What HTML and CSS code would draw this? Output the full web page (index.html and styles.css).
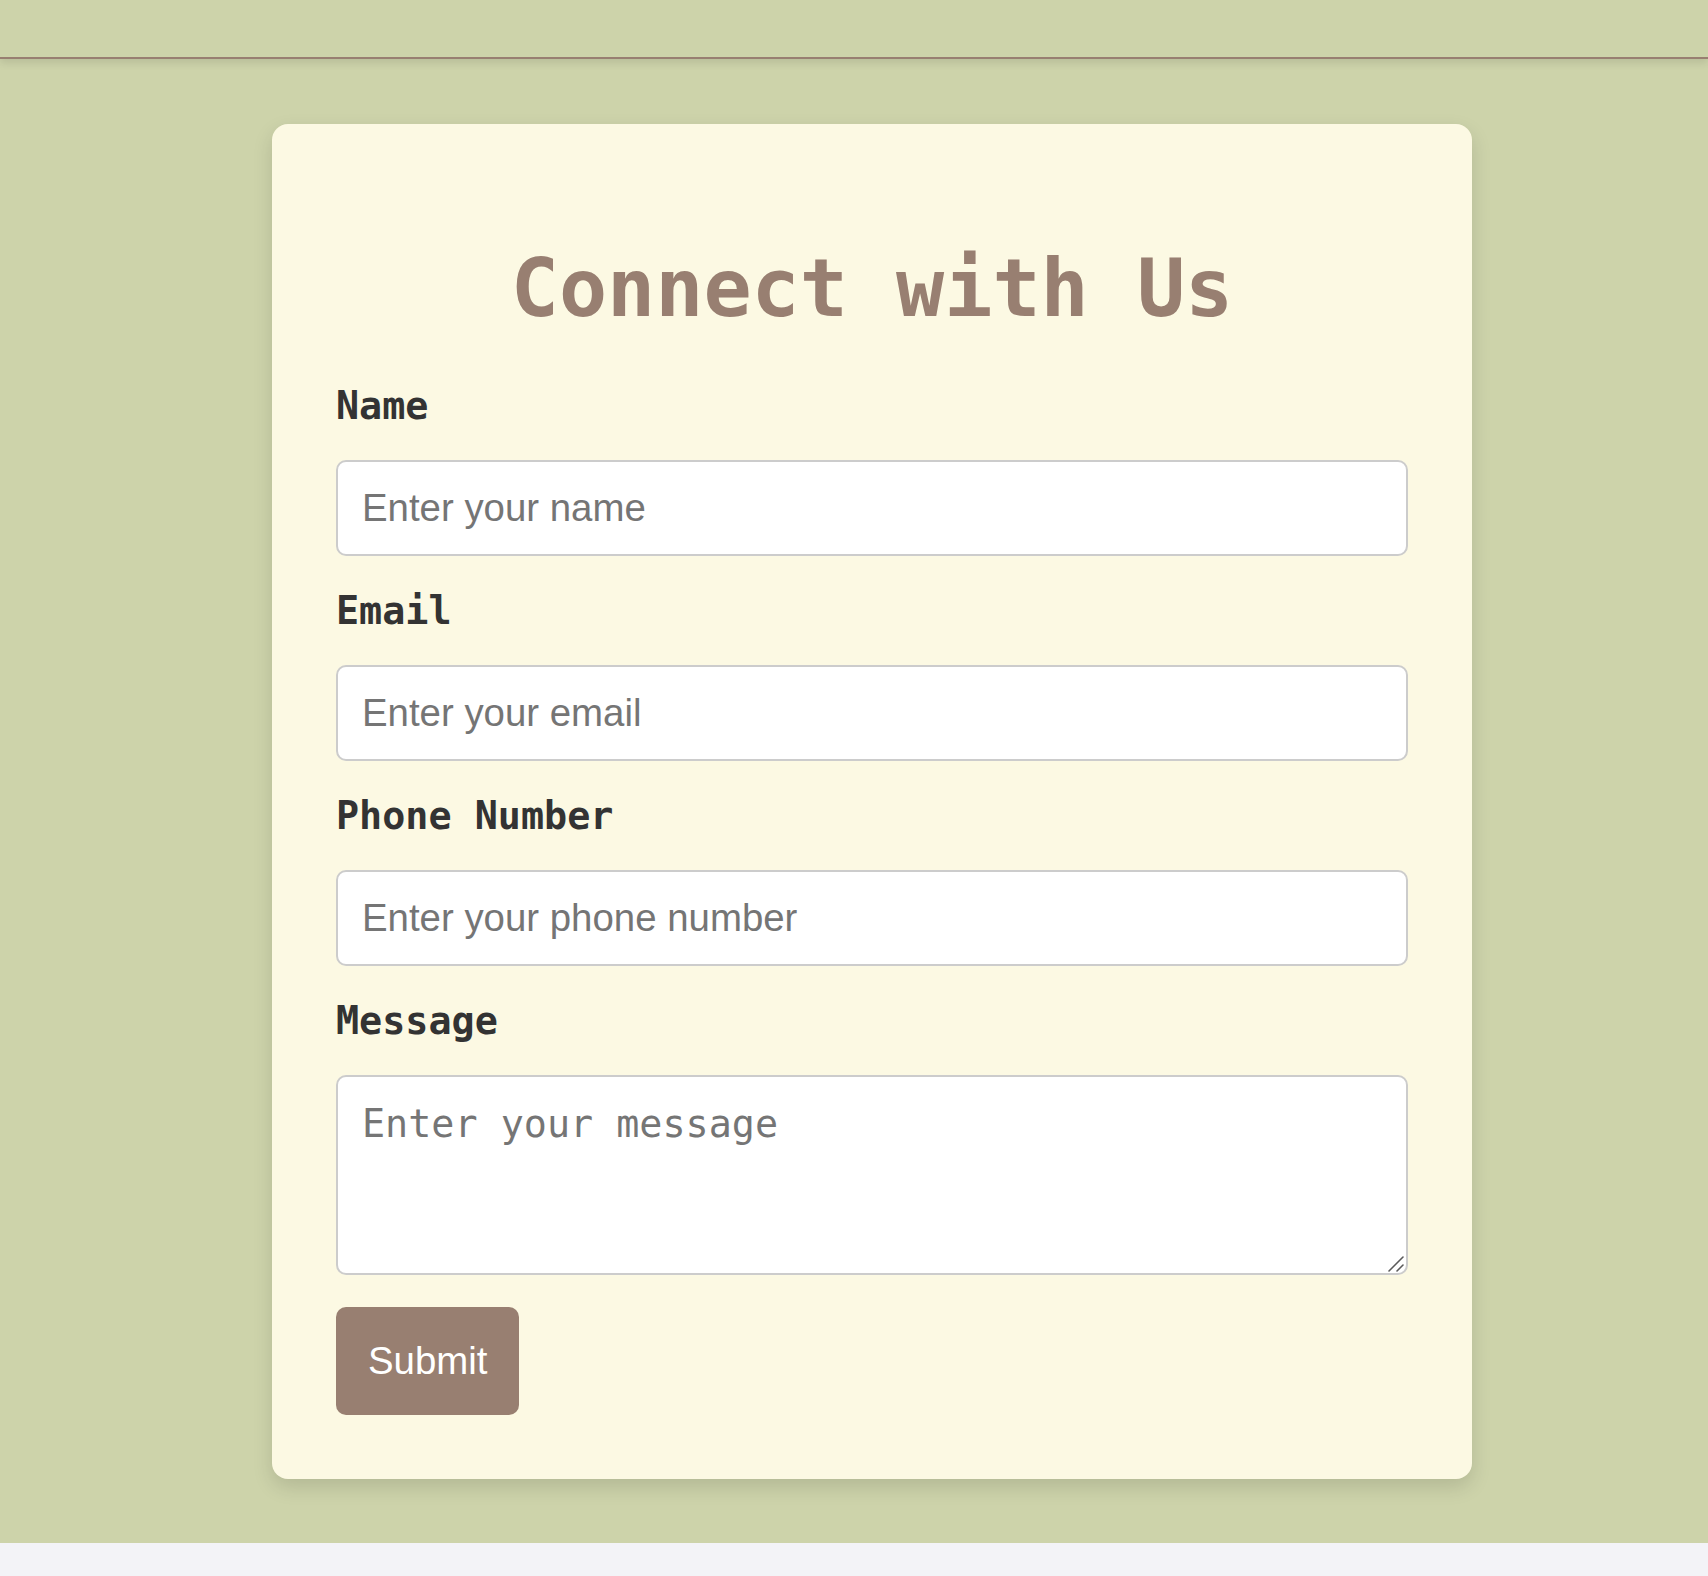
FILE: index.html
```html
<!DOCTYPE html>
<html lang="en">
<head>
<meta charset="utf-8">
<title>Connect with Us</title>
<link rel="stylesheet" href="styles.css">
</head>
<body>
<header class="site-header"></header>
<main class="page">
  <section class="card">
    <h2 class="card-title">Connect with Us</h2>
    <form class="contact-form">
      <div class="form-group">
        <label class="form-label" for="name">Name</label>
        <input class="form-input" id="name" type="text" placeholder="Enter your name">
      </div>
      <div class="form-group">
        <label class="form-label" for="email">Email</label>
        <input class="form-input" id="email" type="email" placeholder="Enter your email">
      </div>
      <div class="form-group">
        <label class="form-label" for="phone">Phone Number</label>
        <input class="form-input" id="phone" type="tel" placeholder="Enter your phone number">
      </div>
      <div class="form-group">
        <label class="form-label" for="message">Message</label>
        <div class="textarea-wrap">
          <textarea class="form-textarea" id="message" placeholder="Enter your message"></textarea>
          <svg class="resize-grip" width="18" height="18" viewBox="0 0 18 18" aria-hidden="true">
            <line x1="2" y1="17" x2="16" y2="3" stroke="#5a5a5a" stroke-width="1.6" stroke-linecap="round"/>
            <line x1="10" y1="17" x2="16" y2="11" stroke="#5a5a5a" stroke-width="1.6" stroke-linecap="round"/>
          </svg>
        </div>
      </div>
      <button class="submit-btn" type="submit">Submit</button>
    </form>
  </section>
</main>
</body>
</html>
```
FILE: styles.css
```css
html {
  background: #f3f3f7;
}
body {
  margin: 0;
  font-family: "DejaVu Sans Mono", monospace;
}
.site-header {
  height: 57px;
  background: #cdd3aa;
  border-bottom: 2px solid #987f71;
  box-shadow: 0 4px 8px rgba(0, 0, 0, 0.1);
  position: relative;
  z-index: 1;
}
.page {
  background: #cdd3aa;
  padding: 65px 0 64px 36px;
  display: flex;
  justify-content: center;
}
.card {
  width: 1200px;
  box-sizing: border-box;
  background: #fcf9e3;
  border-radius: 16px;
  padding: 64px;
  box-shadow: 0 8px 20px rgba(0, 0, 0, 0.13);
}
.card-title {
  margin: 54px 0 48px;
  text-align: center;
  font-family: "DejaVu Sans Mono", monospace;
  font-weight: bold;
  font-size: 80px;
  line-height: normal;
  color: #987f71;
}
.contact-form {
  display: flex;
  flex-direction: column;
  align-items: flex-start;
}
.form-group {
  width: 100%;
  margin-bottom: 32px;
}
.form-label {
  display: block;
  margin-bottom: 32px;
  font-family: "DejaVu Sans Mono", monospace;
  font-weight: bold;
  font-size: 38.4px;
  line-height: normal;
  color: #333333;
}
.form-input,
.form-textarea {
  display: block;
  width: 100%;
  box-sizing: border-box;
  margin: 0;
  padding: 24px;
  border: 2px solid #cccccc;
  border-radius: 10px;
  background: #ffffff;
  font-size: 38.4px;
  color: #333333;
}
.form-input {
  font-family: "Liberation Sans", Arial, sans-serif;
  line-height: normal;
  height: 96px;
}
.textarea-wrap {
  position: relative;
}
.form-textarea {
  font-family: "DejaVu Sans Mono", monospace;
  height: 200px;
  line-height: normal;
  resize: none;
}
.resize-grip {
  position: absolute;
  right: 3px;
  bottom: 3px;
  pointer-events: none;
}
.form-input::placeholder,
.form-textarea::placeholder {
  color: #757575;
}
.submit-btn {
  margin: 0;
  padding: 32px;
  border: none;
  border-radius: 10px;
  background: #987f71;
  color: #ffffff;
  font-family: "Liberation Sans", Arial, sans-serif;
  font-size: 38.4px;
  line-height: normal;
  cursor: pointer;
}
```
